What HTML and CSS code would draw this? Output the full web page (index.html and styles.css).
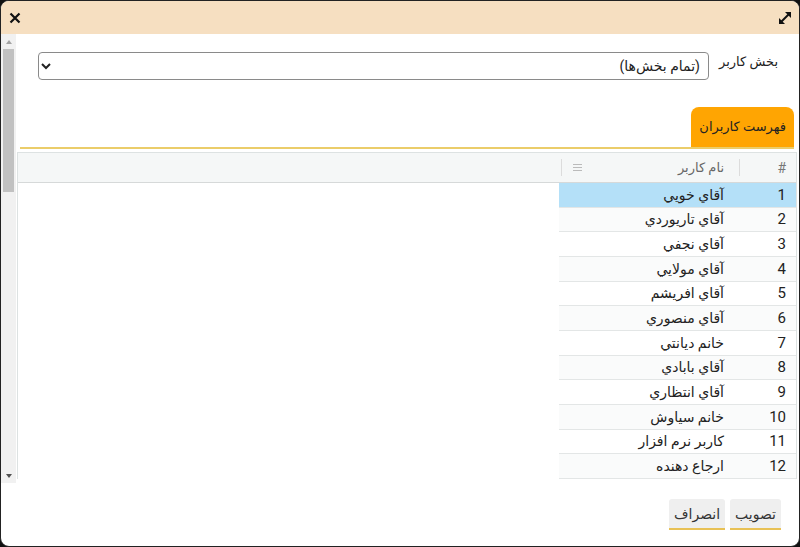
FILE: index.html
```html
<!DOCTYPE html>
<html lang="fa" dir="rtl">
<head>
    <meta charset="UTF-8">
    <meta name="viewport" content="width=device-width, initial-scale=1.0">
    <title>فهرست کاربران</title>
    <link rel="stylesheet" href="styles.css">
</head>
<body>
    <div class="dialog">
        <div class="titlebar">
            <span class="title-icon expand">
                <svg width="14" height="14" viewBox="0 0 14 14">
                    <path d="M2.5 11.5 L11.5 2.5" stroke="#111" stroke-width="2" fill="none"/>
                    <path d="M7 1 H13 V7 Z" fill="#111"/>
                    <path d="M1 7 V13 H7 Z" fill="#111"/>
                </svg>
            </span>
            <span class="title-icon close">
                <svg width="12" height="12" viewBox="0 0 12 12">
                    <path d="M1.5 1.5 L10.5 10.5 M10.5 1.5 L1.5 10.5" stroke="#111" stroke-width="2.2" fill="none"/>
                </svg>
            </span>
        </div>

        <div class="dialog-body">
            <div class="content">
                <div class="field-row">
                    <label class="field-label" for="section">بخش کاربر</label>
                    <select class="field-select" id="section">
                        <option>(تمام بخش‌ها)</option>
                    </select>
                </div>

                <div class="tabs">
                    <div class="tab active">فهرست کاربران</div>
                </div>

                <div class="grid">
                    <div class="grid-head">
                        <div class="head-cell col-num">#</div>
                        <span class="head-sep"></span>
                        <div class="head-cell col-name">
                            <span>نام کاربر</span>
                            <span class="col-menu"></span>
                        </div>
                        <span class="head-sep"></span>
                    </div>
                    <div class="grid-body" id="rows"></div>
                </div>
            </div>

            <!-- scrollbar of the dialog body (left side in rtl) -->
            <div class="scrollbar">
                <span class="sb-arrow up"></span>
                <div class="sb-track"><div class="sb-thumb"></div></div>
                <span class="sb-arrow down"></span>
            </div>
        </div>

        <div class="dialog-footer">
            <button class="btn">تصویب</button>
            <button class="btn">انصراف</button>
        </div>
    </div>

    <script>
        const users = [
            'آقاي خويي',
            'آقاي تاريوردي',
            'آقاي نجفي',
            'آقاي مولايي',
            'آقاي افريشم',
            'آقاي منصوري',
            'خانم ديانتي',
            'آقاي بابادي',
            'آقاي انتظاري',
            'خانم سياوش',
            'کاربر نرم افزار',
            'ارجاع دهنده'
        ];

        const rows = document.getElementById('rows');
        users.forEach((name, i) => {
            const row = document.createElement('div');
            row.className = 'grid-row' + (i === 0 ? ' selected' : '') + (i % 2 ? ' odd' : '');
            row.innerHTML = '<div class="cell col-num">' + (i + 1) + '</div>' +
                            '<div class="cell col-name">' + name + '</div>';
            rows.appendChild(row);
        });
    </script>
</body>
</html>
```

FILE: styles.css
```css
html, body {
    margin: 0;
    padding: 0;
    height: 100%;
}
body {
    background: #111;
    font-family: Roboto, "DejaVu Sans", sans-serif;
    color: #222;
}
.dialog {
    box-sizing: border-box;
    height: 100vh;
    border: 1px solid #222;
    border-radius: 9px;
    background: #fff;
    overflow: hidden;
    display: flex;
    flex-direction: column;
    direction: rtl;
}
.titlebar {
    height: 33px;
    flex: none;
    background: #f6dfc1;
    display: flex;
    align-items: center;
    justify-content: space-between;
    padding: 0 7px 0 8px;
}
.title-icon {
    display: flex;
}
.dialog-body {
    flex: 1;
    min-height: 0;
    display: flex;
}
.content {
    flex: 1;
    overflow: hidden;
    padding: 0 2px 0 1px;
}
.scrollbar {
    width: 15px;
    flex: none;
    background: #f1f1f1;
    display: flex;
    flex-direction: column;
}
.sb-arrow {
    height: 15px;
    flex: none;
    display: flex;
    align-items: center;
    justify-content: center;
}
.sb-arrow::before {
    content: '';
    border-left: 3px solid transparent;
    border-right: 3px solid transparent;
}
.sb-arrow.up::before {
    border-bottom: 4px solid #a3a3a3;
}
.sb-arrow.down::before {
    border-top: 4px solid #505050;
}
.sb-track {
    flex: 1;
}
.sb-thumb {
    height: 143px;
    margin: 0 2px;
    background: #c1c1c1;
}
.field-row {
    display: flex;
    align-items: flex-start;
    gap: 10px;
    padding: 18px 19px 0 21px;
}
.field-label {
    font-size: 13px;
    line-height: 20px;
    white-space: nowrap;
}
.field-select {
    flex: 1;
    height: 28px;
    border: 1px solid #8a8a8a;
    border-radius: 4px;
    background: #fff;
    font-family: inherit;
    font-size: 14px;
    color: #222;
    padding: 0 4px;
}
.tabs {
    display: flex;
    margin: 27px 3px 0 3px;
    border-bottom: 2px solid #ebcd6a;
}
.tab {
    padding: 0 8px;
    height: 40px;
    line-height: 40px;
    font-size: 13px;
    border-radius: 8px 8px 0 0;
}
.tab.active {
    background: #ffa502;
    color: #222;
}
.grid {
    margin-top: 3px;
    border: 1px solid #dde2e2;
    border-bottom: none;
}
.grid-head {
    display: flex;
    align-items: center;
    height: 29px;
    background: #f5f7f7;
    border-bottom: 1px solid #d6d9d9;
}
.head-cell {
    font-size: 13px;
    color: #666;
    height: 100%;
    display: flex;
    align-items: center;
    box-sizing: border-box;
}
.head-sep {
    width: 1px;
    height: 17px;
    background: #dcdcdc;
}
.grid-head .col-num {
    width: 56px;
    padding-right: 10px;
    font-size: 14px;
    color: #777;
}
.grid-head .col-name {
    width: 177px;
    padding: 0 15px 0 11px;
    justify-content: space-between;
}
.col-menu {
    width: 9px;
    height: 7px;
    border-top: 1px solid #bbb;
    border-bottom: 1px solid #bbb;
    box-sizing: border-box;
    position: relative;
}
.col-menu::after {
    content: '';
    position: absolute;
    left: 0;
    right: 0;
    top: 2px;
    height: 1px;
    background: #bbb;
}
.grid-row {
    display: flex;
    width: 237px;
    height: 24.67px;
    box-sizing: border-box;
    border-bottom: 1px solid #e3e6e6;
    font-size: 14px;
}
.grid-row.odd {
    background: #fafbfb;
}
.grid-row.selected {
    background: #b4e0f8;
}
.cell {
    display: flex;
    align-items: center;
    box-sizing: border-box;
    white-space: nowrap;
}
.grid-row .col-num {
    width: 57px;
    padding-right: 10px;
    font-size: 15px;
}
.grid-row .col-name {
    width: 180px;
    padding-right: 15px;
}
.dialog-footer {
    flex: none;
    height: 63px;
    display: flex;
    align-items: flex-start;
    gap: 5px;
    padding: 16px 18px 0 0;
    box-sizing: border-box;
}
.btn {
    font-family: inherit;
    font-size: 14px;
    color: #333;
    background: #efefef;
    border: none;
    border-bottom: 2px solid #e8c155;
    border-radius: 3px 3px 0 0;
    height: 31px;
    padding: 0 5px;
}
```
